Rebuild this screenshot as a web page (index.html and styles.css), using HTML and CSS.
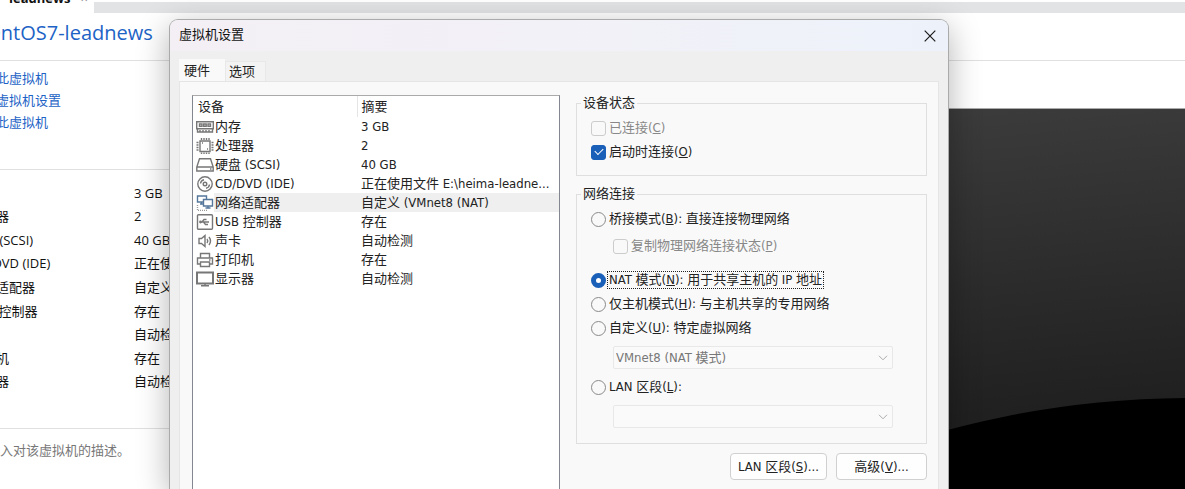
FILE: index.html
```html
<!DOCTYPE html>
<html lang="zh-CN">
<head>
    <meta charset="UTF-8">
    <meta name="viewport" content="width=device-width, initial-scale=1.0">
    <title>虚拟机设置</title>
    <link rel="stylesheet" href="styles.css">
</head>
<body>
    <div class="workspace">
        <div class="tab-strip">
            <div class="vm-tab"><span>leadnews</span><span class="tab-close">×</span></div>
        </div>
        <h1 class="vm-title">CentOS7-leadnews</h1>
        <div class="vm-content">
            <div class="vm-side">
                <nav class="vm-links">
                    <a href="#">开启此虚拟机</a>
                    <a href="#">编辑虚拟机设置</a>
                    <a href="#">升级此虚拟机</a>
                </nav>
                <section class="vm-devices">
                    <table>
                        <tr><td>内存</td><td>3 GB</td></tr>
                        <tr><td>处理器</td><td>2</td></tr>
                        <tr><td>硬盘 (SCSI)</td><td>40 GB</td></tr>
                        <tr><td>CD/DVD (IDE)</td><td>正在使用文件</td></tr>
                        <tr><td>网络适配器</td><td>自定义</td></tr>
                        <tr><td>USB 控制器</td><td>存在</td></tr>
                        <tr><td>声卡</td><td>自动检测</td></tr>
                        <tr><td>打印机</td><td>存在</td></tr>
                        <tr><td>显示器</td><td>自动检测</td></tr>
                    </table>
                </section>
                <p class="vm-description">在此处键入对该虚拟机的描述。</p>
            </div>
            <div class="vm-screen">
                <svg viewBox="0 0 335 381" preserveAspectRatio="xMaxYMin slice">
                    <circle cx="341" cy="1234" r="945" fill="#000"/>
                </svg>
            </div>
        </div>
    </div>

    <div class="dialog" role="dialog" aria-labelledby="dialog-title">
        <header class="title-bar">
            <span id="dialog-title">虚拟机设置</span>
            <button class="close" aria-label="关闭">
                <svg width="12" height="12" viewBox="0 0 12 12"><path d="M.7.7l10.6 10.6M11.3.7L.7 11.3" stroke="#1a1a1a" stroke-width="1.2"/></svg>
            </button>
        </header>
        <div class="tabs" role="tablist">
            <button class="tab active" role="tab">硬件</button>
            <button class="tab" role="tab">选项</button>
        </div>
        <div class="panel">
            <div class="device-list">
                <table>
                    <colgroup><col class="col-icon"><col class="col-name"><col></colgroup>
                    <thead>
                        <tr><th colspan="2">设备</th><th>摘要</th></tr>
                    </thead>
                    <tbody>
                        <tr>
                            <td><svg class="icon" viewBox="0 0 18 16"><path d="M.7 2.700h16.600v7H.7zM1.500 10v3h15v-3M4 13v-2M7 13v-2M10 13v-2M13 13v-2"/><path d="M3.500 5h2.500v2.200H3.500zM7.700 5h2.500v2.200H7.700zM12 5h2.500v2.200H12z"/></svg></td>
                            <td>内存</td><td>3 GB</td>
                        </tr>
                        <tr>
                            <td><svg class="icon" viewBox="0 0 18 16"><path d="M4 3h10v10.500H4z"/><path d="M5.500 0v2M8 0v2M10.500 0v2M13 0v2M5.500 14.500v1.500M8 14.500v1.500M10.500 14.500v1.500M13 14.500v1.500M.5 4.500h2M.5 7h2M.5 9.500h2M.5 12h2M15.500 4.500h2M15.500 7h2M15.500 9.500h2M15.500 12h2M6 5h1M11 11h1"/></svg></td>
                            <td>处理器</td><td>2</td>
                        </tr>
                        <tr>
                            <td><svg class="icon" viewBox="0 0 18 16"><path d="M3.500 1.700h11l2.700 8.300v4H.8v-4zM.8 10h16.400M14 12h1.500"/></svg></td>
                            <td>硬盘 (SCSI)</td><td>40 GB</td>
                        </tr>
                        <tr>
                            <td><svg class="icon" viewBox="0 0 18 16"><circle cx="9" cy="8" r="7.200"/><circle cx="9" cy="8" r="1.800"/><path d="M4.500 7.500A4.500 4.500 0 0 1 8 3.700M13.500 8.500A4.500 4.500 0 0 1 10 12.300"/></svg></td>
                            <td>CD/DVD (IDE)</td><td>正在使用文件 E:\heima-leadne...</td>
                        </tr>
                        <tr class="selected">
                            <td><svg class="icon network" viewBox="0 0 18 16"><path d="M1.500 1h9v6h-9zM4 9h3M5.500 7v2"/><path class="front" d="M7.500 4.500h9v6.500h-9z"/><path d="M12 11v2M9.500 13h5"/><path class="dots" d="M1.500 10v5.500h10"/></svg></td>
                            <td>网络适配器</td><td>自定义 (VMnet8 (NAT)</td>
                        </tr>
                        <tr>
                            <td><svg class="icon" viewBox="0 0 18 16"><rect x="1.500" y=".7" width="15" height="14.600" rx="1"/><path d="M4 8h9M6 8l2-2.500h2.500M7.500 8l2 2.500H12"/><circle cx="4.500" cy="8" r=".7"/></svg></td>
                            <td>USB 控制器</td><td>存在</td>
                        </tr>
                        <tr>
                            <td><svg class="icon" viewBox="0 0 18 16"><path d="M3 5.500h2.500L9 2.500v11l-3.500-3H3zM11 6q1.500 2 0 4M13 4q3 4 0 8"/></svg></td>
                            <td>声卡</td><td>自动检测</td>
                        </tr>
                        <tr>
                            <td><svg class="icon" viewBox="0 0 18 16"><path d="M4.500 6V1.500h9V6M4.500 12H1.500V6h15v6h-3M4.500 10h9v4.500h-9zM13 8h1.500"/></svg></td>
                            <td>打印机</td><td>存在</td>
                        </tr>
                        <tr>
                            <td><svg class="icon" viewBox="0 0 18 16"><path class="thick" d="M1 1.500h16v11H1z"/><path d="M9 12.500v2M5 14.700h8"/></svg></td>
                            <td>显示器</td><td>自动检测</td>
                        </tr>
                    </tbody>
                </table>
            </div>

            <form class="settings">
                <fieldset>
                    <legend>设备状态</legend>
                    <div class="option disabled">
                        <input type="checkbox" id="connected" disabled>
                        <label for="connected">已连接(<u>C</u>)</label>
                    </div>
                    <div class="option">
                        <input type="checkbox" id="connect-on-start" checked>
                        <label for="connect-on-start">启动时连接(<u>O</u>)</label>
                    </div>
                </fieldset>

                <fieldset class="network-group">
                    <legend>网络连接</legend>
                    <div class="option">
                        <input type="radio" name="network" id="bridged">
                        <label for="bridged">桥接模式(<u>B</u>): 直接连接物理网络</label>
                    </div>
                    <div class="option nested disabled">
                        <input type="checkbox" id="replicate" disabled>
                        <label for="replicate">复制物理网络连接状态(<u>P</u>)</label>
                    </div>
                    <div class="option focused">
                        <input type="radio" name="network" id="nat" checked>
                        <label for="nat">NAT 模式(<u>N</u>): 用于共享主机的 IP 地址</label>
                    </div>
                    <div class="option">
                        <input type="radio" name="network" id="host-only">
                        <label for="host-only">仅主机模式(<u>H</u>): 与主机共享的专用网络</label>
                    </div>
                    <div class="option">
                        <input type="radio" name="network" id="custom">
                        <label for="custom">自定义(<u>U</u>): 特定虚拟网络</label>
                    </div>
                    <div class="combo">
                        <select aria-label="特定虚拟网络" disabled>
                            <option>VMnet8 (NAT 模式)</option>
                        </select>
                        <svg width="10" height="6" viewBox="0 0 10 6"><path d="M1 .8l4 4 4-4"/></svg>
                    </div>
                    <div class="option">
                        <input type="radio" name="network" id="lan">
                        <label for="lan">LAN 区段(<u>L</u>):</label>
                    </div>
                    <div class="combo">
                        <select aria-label="LAN 区段" disabled></select>
                        <svg width="10" height="6" viewBox="0 0 10 6"><path d="M1 .8l4 4 4-4"/></svg>
                    </div>
                </fieldset>

                <div class="buttons">
                    <button type="button">LAN 区段(<u>S</u>)...</button>
                    <button type="button">高级(<u>V</u>)...</button>
                </div>
            </form>
        </div>
    </div>
</body>
</html>
```
FILE: styles.css
```css
* {
    box-sizing: border-box;
}

body {
    margin: 0;
    height: 100vh;
    position: relative;
    overflow: hidden;
    background-color: #fff;
    color: #111;
    font-family: "Open Sans", "Noto Sans CJK SC", sans-serif;
    font-size: 13px;
}

button, select {
    font: inherit;
    color: inherit;
}

/* Main window behind the dialog */
.workspace {
    display: flex;
    flex-direction: column;
    height: 100%;
}

.tab-strip {
    flex: none;
    height: 13px;
    border-top: 2px solid #fff;
    background-color: #e2e3e5;
}

.vm-tab {
    display: flex;
    gap: 10px;
    width: 94px;
    height: 11px;
    padding-left: 9px;
    background-color: #fff;
    font-weight: bold;
    line-height: 16px;
}

.vm-tab span {
    margin-top: -12px;
}

.vm-tab .tab-close {
    color: #888;
    font-weight: normal;
}

.vm-title {
    flex: none;
    margin: 0 0 0 -23px;
    height: 48px;
    border-bottom: 1px solid #e0e0e0;
    color: #1d63c6;
    font-size: 20px;
    font-weight: normal;
    line-height: 40px;
}

.vm-content {
    flex: 1;
    display: flex;
    min-height: 0;
}

.vm-side {
    width: 400px;
    margin-left: -52px;
}

.vm-links {
    display: flex;
    flex-direction: column;
    height: 109px;
    padding: 6px 0 0 22px;
    border-bottom: 1px solid #e0e0e0;
}

.vm-links a {
    color: #1d63c6;
    line-height: 22px;
    text-decoration: none;
}

.vm-devices {
    padding: 11px 0 35px 22px;
    border-bottom: 1px solid #e0e0e0;
}

.vm-devices table {
    width: 100%;
    height: 212px;
    border-collapse: collapse;
    line-height: 20px;
}

.vm-devices td {
    padding: 0;
}

.vm-devices td:first-child {
    width: 164px;
}

.vm-description {
    margin: 0;
    padding-top: 11px;
    color: #777;
    line-height: 20px;
}

.vm-screen {
    flex: 1;
    margin-top: 47px;
    border-top: 1px solid #aaa;
    background: linear-gradient(175deg, #404040, #202020 80%);
}

.vm-screen svg {
    display: block;
    width: 335px;
    height: 100%;
    margin-left: auto;
}

/* Settings dialog */
.dialog {
    position: absolute;
    top: 19px;
    right: 236px;
    bottom: 0;
    left: 169px;
    display: flex;
    flex-direction: column;
    border: 1px solid #aaa;
    border-bottom: none;
    border-radius: 9px 9px 0 0;
    background-color: #efefef;
    box-shadow: 0 8px 32px rgba(0, 0, 0, 0.3);
    color: #222;
    font-family: "DejaVu Sans Condensed", "Noto Sans CJK SC", sans-serif;
}

.title-bar {
    display: flex;
    align-items: center;
    justify-content: space-between;
    height: 31px;
    padding: 0 12px 0 9px;
    border-radius: 8px 8px 0 0;
    background: linear-gradient(90deg, #f3eff5, #f2f1f7 50%, #edf2fa);
    color: #111;
    line-height: 16px;
}

.title-bar span {
    padding-bottom: 2px;
}

.close {
    display: flex;
    padding: 0;
    border: none;
    background: none;
}

.tabs {
    display: flex;
    align-items: flex-end;
    height: 30px;
    padding-left: 9px;
}

.tab {
    height: 20px;
    padding: 0 10px 0 3px;
    border: 1px solid #e8e8e8;
    border-bottom: none;
    background-color: #f3f3f3;
    line-height: 18px;
}

.tab.active {
    height: 22px;
    padding-right: 14px;
    padding-left: 4px;
    border-color: #f9f9f9;
    background-color: #f9f9f9;
}

.panel {
    flex: 1;
    display: flex;
    gap: 16px;
    margin: 0 9px;
    padding: 13px 11px 0 12px;
    border: 1px solid #e5e5e5;
    border-bottom: none;
    background-color: #f9f9f9;
}

.device-list {
    flex: 0 0 368px;
    border: 1px solid #828790;
    border-top-color: #aaa;
    border-bottom: none;
    background-color: #fff;
}

.device-list table {
    width: 100%;
    table-layout: fixed;
    border-collapse: collapse;
}

.col-icon {
    width: 21px;
}

.col-name {
    width: 143px;
}

.device-list th {
    height: 21px;
    padding: 0 0 0 5px;
    font-weight: normal;
    line-height: 19px;
    text-align: left;
}

.device-list th + th {
    padding-left: 4px;
    border-left: 1px solid #e5e5e5;
}

.device-list td {
    height: 19px;
    padding: 0 0 0 1px;
    line-height: 19px;
    white-space: nowrap;
}

.device-list td:first-child {
    padding-left: 3px;
}

.device-list td:last-child {
    padding-left: 4px;
}

.selected td:not(:first-child) {
    background-color: #efefef;
}

.icon {
    display: block;
    width: 18px;
    height: 16px;
    fill: none;
    stroke: #777;
    stroke-width: 1.4;
}

.icon .thick {
    stroke-width: 2;
}

.icon.network {
    stroke: #54779b;
}

.icon .front {
    fill: #fff;
}

.icon .dots {
    stroke: #999;
    stroke-dasharray: 1 1;
}

.settings {
    flex: 1;
}

fieldset {
    margin: 0;
    padding: 5px 33px 11px 14px;
    border: 1px solid #dfdfdf;
}

legend {
    margin-left: -10px;
    padding: 0 2px;
    line-height: 16px;
}

.network-group {
    margin-top: 10px;
    padding-bottom: 15px;
}

.option {
    display: flex;
    align-items: center;
    gap: 2px;
    height: 24px;
    line-height: 16px;
}

.option label {
    padding: 0 1px;
}

.option.disabled {
    color: #888;
}

.option.nested {
    margin: 3px 0 10px 22px;
}

.option.focused label {
    outline: 1px dotted #222;
}

input {
    appearance: none;
    flex: none;
    display: grid;
    place-items: center;
    width: 15px;
    height: 15px;
    margin: 0;
    border: 1px solid #8a8a8a;
    border-radius: 3px;
    background-color: #f9f9f9;
}

input:disabled {
    border-color: #ccc;
}

input[type="radio"] {
    border-radius: 50%;
}

input[type="radio"]:checked {
    border: 5px solid #1a5fb8;
    background-color: #fff;
}

input[type="checkbox"]:checked {
    border-color: #1a5fb8;
    background-color: #1a5fb8;
}

input[type="checkbox"]:checked::before {
    content: "";
    width: 7px;
    height: 4px;
    margin-bottom: 3px;
    border: solid #fff;
    border-width: 0 0 1px 1px;
    transform: rotate(-45deg);
}

.combo {
    position: relative;
    margin: 6px 0 6px 22px;
}

.combo select {
    appearance: none;
    display: block;
    width: 100%;
    height: 23px;
    padding: 0 2px;
    border: 1px solid #e8e8e8;
    border-radius: 2px;
    background-color: #fafafa;
    color: #777;
    opacity: 1;
}

.combo svg {
    position: absolute;
    top: 9px;
    right: 5px;
    fill: none;
    stroke: #aaa;
}

.network-group .combo:last-child {
    margin-bottom: 0;
}

.buttons {
    display: flex;
    justify-content: flex-end;
    gap: 9px;
    margin-top: 9px;
}

.buttons button {
    min-width: 91px;
    height: 27px;
    padding: 0 7px;
    border: 1px solid #d0d0d0;
    border-radius: 4px;
    background-color: #fefefe;
    line-height: 20px;
}
```
